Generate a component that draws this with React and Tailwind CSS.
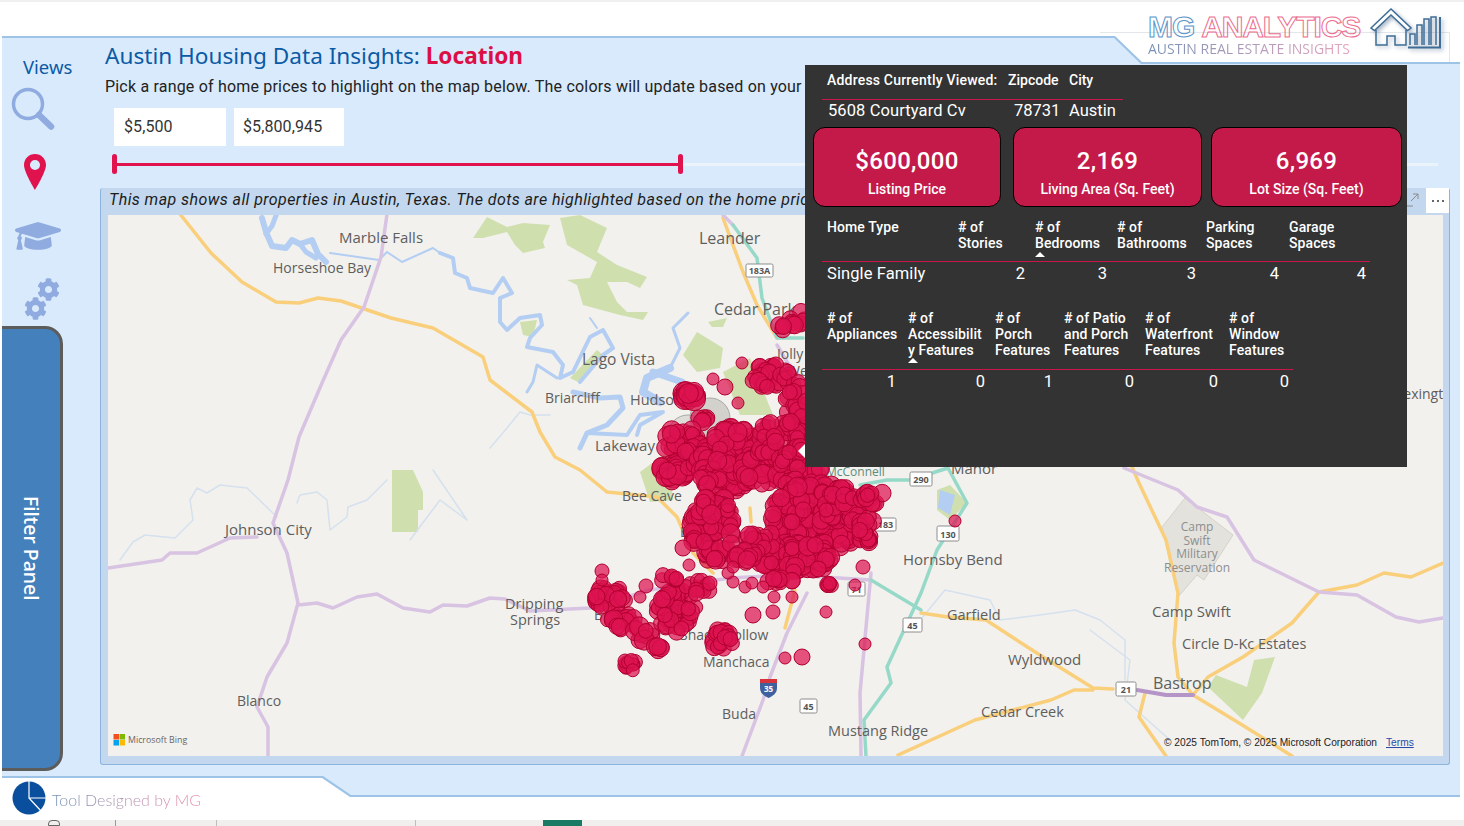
import React from 'react';
import { FaCog, FaGraduationCap } from 'react-icons/fa';

const din = "font-['Roboto','Liberation_Sans',sans-serif]";

// x, y, rx, ry, count, min radius, max radius
const clusters = [
  [797, 318, 8, 9, 8, 7, 9], [780, 328, 5, 3, 4, 7, 9],
  [771, 376, 21, 12, 42, 7, 9], [797, 410, 12, 30, 34, 7, 9],
  [690, 395, 8, 5, 16, 9, 12], [702, 418, 6, 4, 7, 7, 9],
  [683, 443, 18, 16, 40, 7, 10], [672, 472, 16, 9, 30, 8, 11],
  [703, 457, 24, 14, 36, 7, 10], [733, 441, 20, 20, 44, 7, 10],
  [725, 475, 26, 16, 55, 7, 10], [762, 467, 22, 18, 46, 7, 10],
  [780, 440, 25, 20, 56, 7, 9], [800, 467, 22, 22, 60, 7, 9],
  [713, 528, 22, 34, 95, 7, 10], [815, 520, 45, 38, 230, 7, 10],
  [843, 507, 18, 20, 50, 7, 9], [866, 530, 10, 14, 20, 7, 9],
  [872, 497, 12, 8, 18, 7, 9], [797, 558, 38, 15, 90, 7, 10],
  [760, 540, 16, 12, 28, 7, 9], [747, 555, 16, 8, 18, 7, 9],
  [829, 585, 6, 2, 6, 6, 8], [780, 580, 15, 4, 10, 7, 9],
  [610, 597, 16, 12, 34, 7, 9], [620, 620, 14, 10, 16, 7, 10],
  [643, 633, 10, 10, 10, 7, 10], [657, 648, 5, 5, 5, 7, 9],
  [630, 665, 7, 7, 11, 6, 8], [677, 610, 20, 22, 62, 7, 9],
  [700, 587, 14, 7, 13, 7, 8], [670, 578, 10, 5, 7, 7, 8],
  [723, 640, 12, 12, 24, 7, 9],
];

const strays = [
  [742, 363, 6], [713, 379, 6], [725, 387, 8], [738, 403, 6], [683, 548, 8], [689, 565, 6],
  [863, 567, 7], [855, 585, 6], [826, 612, 6], [865, 644, 6], [785, 658, 6], [802, 657, 8],
  [753, 615, 8], [773, 612, 7], [792, 597, 6], [774, 597, 6], [763, 587, 6], [745, 587, 6],
  [752, 583, 6], [733, 582, 6], [728, 573, 6], [733, 567, 6], [646, 586, 7], [640, 597, 6],
  [602, 571, 7], [602, 580, 6], [955, 521, 6],
];

const buildDots = () => {
  let seed = 4127;
  const rand = () => {
    seed = (seed * 16807) % 2147483647;
    return seed / 2147483647;
  };
  const dots = [];
  clusters.forEach(([x, y, rx, ry, count, min, max]) => {
    for (let i = 0; i < count; i++) {
      const angle = rand() * Math.PI * 2;
      const dist = Math.sqrt(rand());
      dots.push([x + Math.cos(angle) * dist * rx, y + Math.sin(angle) * dist * ry, min + rand() * (max - min)]);
    }
  });
  return [...dots, ...strays];
};

const dots = buildDots();

const orangeRoads = [
  '180,214 211,253 242,282 276,302 299,303 318,298 341,301 391,318 433,328 483,357 490,380 532,412 540,432 555,457 580,470 607,492 657,497 677,517 693,553 713,573',
  '723,218 743,272 757,305 777,338',
  '921,613 948,617 986,620 1032,650 1093,688 1113,689',
  '1093,690 1074,690 1051,700 975,720 898,755',
  '1132,467 1139,483 1166,540 1178,593 1174,643 1178,677 1193,695 1239,723 1292,756',
  '1193,695 1208,677 1243,657 1292,623 1319,592 1357,585 1384,573 1411,577 1443,563',
  '1145,693 1139,717 1166,756',
  '795,590 785,628',
  '750,508 751,522',
];

const purpleRoads = [
  '387,214 381,257 364,307 341,340 322,383 299,437 288,480 273,523 287,553 298,603 287,643 267,677 257,707 268,727 268,756',
  '108,568 162,560 170,553 197,553 230,538 257,537',
  '298,605 317,603 333,608 357,597 377,594 403,608 430,612 443,605 467,606 490,598 505,599 530,611 590,608 650,590 730,578 790,575 871,580',
  '1124,468 1178,490 1197,507 1227,517 1254,560 1319,592 1357,595 1396,617 1419,622 1443,618',
  '807,593 787,633 770,677 763,700 742,756',
  '871,573 860,693 861,756',
  '723,215 733,225',
  '777,345 787,362 807,385',
];

const tealRoads = [
  '948,468 967,503 937,550 921,593 887,667 891,683 864,720 866,756',
  '860,485 887,480 910,480 948,468',
  '871,580 921,610',
  '733,225 757,258 762,298 777,338 803,338',
];

const lakes = [
  ['262,218 266,232 272,246 286,248 292,240 300,244 312,240 318,254 326,262', 6],
  ['277,213 272,226 266,234', 5],
  ['300,244 306,252 316,258', 5],
  ['440,253 453,258 455,273 467,278 470,288 493,293 503,278 512,293 500,298 500,322 507,330 520,318 540,315 542,325 530,338 527,347 553,352 563,365 560,378 573,372 590,337 603,330 613,348 603,355 580,382', 4],
  ['557,378 537,365 533,382 527,392', 3],
  ['573,392 600,398 620,397 623,408 607,425 587,433 580,448', 5],
  ['587,433 627,435 640,415 663,412 640,425 637,435', 4],
  ['688,313 673,328 680,348 670,368', 3],
  ['670,368 647,378 643,392 660,402', 8],
  ['653,372 682,382', 7],
  ['590,318 597,328', 2],
  ['330,253 379,260 387,252 402,262 433,248 440,253', 2],
];

const faintRivers = [
  '912,630 945,590 990,600 1000,620 1040,615 1075,610 1100,620 1125,640 1125,680',
  '1090,630 1130,660 1125,700 1170,740',
  '490,448 507,428 520,412 530,415 550,415',
  '120,560 133,542 145,535 175,538 193,520 190,500 197,488 207,493 220,485 247,488 277,517',
  '297,503 300,495 317,492 327,500 330,530 347,517 348,507 367,500 387,480',
  '433,470 467,520 440,500 410,540',
];

const greens = [
  '473,238 487,217 507,227 523,223 550,225 543,242 545,248 523,253 515,245 507,232 483,238',
  '560,218 580,215 607,228 597,252 617,265 647,277 640,288 627,282 607,282 617,302 627,312 648,312 643,320 620,315 583,305 577,285 567,280 590,278 597,262 567,245',
  '683,355 697,332 723,348 720,368 697,372',
  '708,322 727,318 723,327 712,327',
  '520,322 537,320 533,337 523,335',
  '570,378 597,350 603,355 580,383',
  '723,372 750,358 773,415 740,415',
  '640,472 667,452 673,500 650,502',
  '392,470 413,470 423,492 423,510 418,510 418,532 392,532',
  '1254,660 1275,657 1262,693 1243,720 1208,687 1216,675 1247,687',
  '937,490 950,485 967,503 950,520 937,510',
];

const labels = [
  ['Marble Falls', 339, 243, 15], ['Horseshoe Bay', 273, 273, 14], ['Leander', 699, 244, 16],
  ['Cedar Park', 714, 315, 16], ['Lago Vista', 582, 365, 15.500], ['Briarcliff', 545, 403, 14],
  ['Hudson', 630, 405, 14.500], ['Lakeway', 595, 451, 15], ['Bee Cave', 622, 501, 14],
  ['Johnson City', 225, 535, 15], ['Dripping', 505, 609, 14.500], ['Springs', 510, 625, 14.500],
  ['Blanco', 237, 706, 14], ['Buda', 722, 719, 14], ['Manchaca', 703, 667, 14],
  ['Mustang Ridge', 828, 736, 14.500], ['Cedar Creek', 981, 717, 14.500], ['Wyldwood', 1008, 665, 15],
  ['Garfield', 947, 620, 14.500], ['Hornsby Bend', 903, 565, 15], ['Manor', 951, 474, 15],
  ['Camp Swift', 1152, 617, 15], ['Circle D-Kc Estates', 1182, 649, 14.500], ['Bastrop', 1153, 689, 16],
  ['Lexington', 1396, 399, 14], ['Jolly', 777, 359, 14], ['Well', 787, 376, 14],
  ['Bar', 680, 537, 14], ['Bear', 594, 620, 14], ['Shady Hollow', 680, 640, 14],
];

const shields = [
  ['183A', 746, 264, 27, 13], ['183', 875, 518, 21, 13], ['290', 910, 472, 22, 14], ['130', 937, 526, 22, 15],
  ['71', 848, 582, 17, 14], ['45', 903, 618, 19, 14], ['45', 800, 699, 17, 14], ['21', 1116, 682, 20, 14],
];

const line = (points, color, width) => (
  <polyline key={points} points={points} fill="none" stroke={color} strokeWidth={width} strokeLinejoin="round" strokeLinecap="round" />
);

const AustinMap = () => (
  <svg viewBox="108 215 1335 541" className="block w-full h-full font-['Open_Sans',sans-serif]">
    <rect x="108" y="215" width="1335" height="541" fill="#f2f1ed" />
    {greens.map((g) => <polygon key={g} points={g} fill="#cfdfae" />)}
    <polygon points="1185,498 1233,535 1204,580 1197,575 1178,597 1162,527" fill="#e3e2dd" stroke="#d5d3c8" />
    {faintRivers.map((r) => line(r, '#d5e1ee', 1.5))}
    {lakes.map(([r, w]) => line(r, '#b3cef2', w))}
    <polygon points="940,490 955,495 950,515 938,508" fill="#b3cef2" />
    {orangeRoads.map((r) => line(r, '#f9cf7c', 3.5))}
    {purpleRoads.map((r) => line(r, '#d8c3e2', 3.5))}
    {tealRoads.map((r) => line(r, '#97d9c8', 3.5))}
    {line('1137,690 1166,695 1193,695', '#b595c8', 4)}
    {labels.map(([text, x, y, size]) => (
      <text key={text} x={x} y={y} fontSize={size} fill="#5e5e5e">{text}</text>
    ))}
    <text x="826" y="476" fontSize="12" fill="#5c8c7c">McConnell</text>
    {['Camp', 'Swift', 'Military', 'Reservation'].map((t, i) => (
      <text key={t} x="1197" y={531 + i * 13.7} fontSize="12" fill="#8e8e8e" textAnchor="middle">{t}</text>
    ))}
    {shields.map(([text, x, y, w, h]) => (
      <g key={`${text}${x}`}>
        <rect x={x} y={y} width={w} height={h} rx="1.5" fill="#fff" stroke="#8d8d8d" />
        <text x={x + w / 2} y={y + h - 3.5} fontSize="9" fontWeight="700" fill="#555" textAnchor="middle">{text}</text>
      </g>
    ))}
    <path d="M760 679h17v9c0 5-4 8-8.500 10c-4.500-2-8.500-5-8.500-10z" fill="#3f5f9f" />
    <path d="M760 679h17v4h-17z" fill="#d8323a" />
    <text x="768.500" y="692" fontSize="8" fontWeight="700" fill="#fff" textAnchor="middle">35</text>
    <circle cx="710" cy="418" r="20" fill="#c9c9c3" fillOpacity="0.8" stroke="#a9a9a9" />
    <circle cx="688" cy="435" r="20" fill="#c9c9c3" fillOpacity="0.5" stroke="#a9a9a9" />
    {dots.map(([x, y, r], i) => (
      <circle key={i} cx={x} cy={y} r={r} fill="#dc1450" fillOpacity="0.72" stroke="#b0002f" strokeWidth="1" />
    ))}
    <g>
      <rect x="113.500" y="734" width="5.500" height="5.500" fill="#f25022" />
      <rect x="119.500" y="734" width="5.500" height="5.500" fill="#7fba00" />
      <rect x="113.500" y="740" width="5.500" height="5.500" fill="#00a4ef" />
      <rect x="119.500" y="740" width="5.500" height="5.500" fill="#ffb900" />
      <text x="128" y="743" fontSize="8.800" fill="#666">Microsoft Bing</text>
    </g>
    <text x="1164" y="746" fontSize="10.200" fill="#222" className="font-['Liberation_Sans',sans-serif]">© 2025 TomTom, © 2025 Microsoft Corporation</text>
    <text x="1386" y="746" fontSize="10.200" fill="#2b4aa8" textDecoration="underline" className="font-['Liberation_Sans',sans-serif]">Terms</text>
  </svg>
);

const HouseMark = () => (
  <svg viewBox="0 0 72 44" className="w-[72px] h-[44px] drop-shadow-[2px_2px_2px_rgba(60,90,130,0.45)]" fill="none" stroke="#3f6d96" strokeWidth="1.500">
    <path d="M1 21L21 2L41 21L37.500 23.500L21 8L4.500 23.500Z" fill="#fff" />
    <path d="M6 23V38H17V29H25V38H36V23" />
    <path d="M40 38V27H45V38M47 38V18H52V38M54 38V12H59V38M61 38V10H66V38" />
    <path d="M38 40.500H70V10" strokeWidth="2" />
  </svg>
);

const Logo = () => (
  <div className="flex items-start h-[62px] pr-[22px]">
    <div className="w-[222px] pt-[10px]">
      <div className="flex gap-[7px] h-[28px] text-[30px] leading-[30px] font-bold tracking-[-1.1px] text-transparent font-['Liberation_Sans',sans-serif]">
        <span className="[-webkit-text-stroke:1px_#5b94c8]">MG</span>
        <span className="[-webkit-text-stroke:1px_#ec6d90]">ANALYTICS</span>
      </div>
      <div className="w-fit whitespace-nowrap text-[14px] leading-[17px] bg-gradient-to-r from-[#7690b4] to-[#e5a3bd] bg-clip-text text-transparent font-['Open_Sans',sans-serif]">
        AUSTIN REAL ESTATE INSIGHTS
      </div>
    </div>
    <div className="mt-[5px]">
      <HouseMark />
    </div>
  </div>
);

const Sidebar = () => (
  <div className="w-[98px] shrink-0 flex flex-col items-start text-[#8fabdf]">
    <div className="ml-[21px] mt-[20px] h-[22px] leading-[22px] text-[18.500px] text-[#0b5aa5] font-['Noto_Sans',sans-serif]">Views</div>
    <svg viewBox="0 0 44 43" className="ml-[9px] mt-[9px] w-[44px] h-[43px]" fill="none" stroke="currentColor">
      <circle cx="17" cy="17" r="14.500" strokeWidth="3.500" />
      <path d="M28 28L40 39.500" strokeWidth="6.500" strokeLinecap="round" />
    </svg>
    <svg viewBox="0 0 22 36" className="ml-[22px] mt-[24px] w-[22px] h-[36px] text-[#e0134f]">
      <path fill="currentColor" fillRule="evenodd" d="M11 0C4.900 0 0 4.900 0 11C0 18 11 36 11 36S22 18 22 11C22 4.900 17.100 0 11 0ZM11 6A5 5 0 1 1 11 16A5 5 0 1 1 11 6Z" />
    </svg>
    <FaGraduationCap className="ml-[13px] mt-[27px] w-[46px] h-[38px]" />
    <div className="ml-[22px] mt-[23px] w-[36px] h-[43px] flex flex-col">
      <FaCog className="self-end w-[23px] h-[23px]" />
      <FaCog className="self-start -mt-[4px] w-[23px] h-[23px]" />
    </div>
    <button className="mt-[5px] w-[61px] h-[445px] flex items-center justify-center rounded-r-[18px] border-[3px] border-l-0 border-[#5c5c5c] bg-[#4480bc] text-white text-[19.500px] font-medium font-['Noto_Sans',sans-serif]">
      <span className="[writing-mode:vertical-rl]">Filter Panel</span>
    </button>
  </div>
);

const Slider = () => (
  <div className="relative ml-[13px] mt-[8px] h-[20px] w-[1325px] flex items-center">
    <div className="h-[3px] w-[567px] bg-[#e0134f]" />
    <div className="h-[3px] flex-1 bg-[#eaf2fa]" />
    <div className="absolute left-0 top-0 w-[5px] h-[20px] -ml-[1px] rounded-sm bg-[#e0134f]" />
    <div className="absolute left-[565px] top-0 w-[5px] h-[20px] rounded-sm bg-[#e0134f]" />
  </div>
);

const MapCard = () => (
  <div className="relative mt-[14px] w-[1350px] h-[577px] rounded-[3px] border-l border-b border-r border-[#8db4de] bg-[#c3d8ee] flex flex-col">
    <div className={`h-[27px] pl-[8px] leading-[23px] text-[16px] italic tracking-[0.42px] whitespace-nowrap overflow-hidden text-[#1c1c1c] ${din}`}>
      This map shows all properties in Austin, Texas. The dots are highlighted based on the home price range selected above.
    </div>
    <div className="ml-[7px] w-[1335px] h-[541px]">
      <AustinMap />
    </div>
    <div className="absolute right-[30px] top-[5px] text-[#8c8c8c]">
      <svg viewBox="0 0 14 14" className="w-[14px] h-[14px]" fill="none" stroke="currentColor">
        <path d="M1 6V13H8M6 8L13 1M8 1H13V6" />
      </svg>
    </div>
    <div className="absolute right-0 top-0 w-[23px] h-[25px] bg-white flex items-center justify-center gap-[3px]">
      <span className="w-[2px] h-[2px] bg-[#666]" />
      <span className="w-[2px] h-[2px] bg-[#666]" />
      <span className="w-[2px] h-[2px] bg-[#666]" />
    </div>
  </div>
);

const tableHead = (text, caretClass) => (
  <div key={text} className="relative pl-[5px] tracking-[0.1px]">
    {text.split('\n').map((t) => <div key={t} className="whitespace-nowrap">{t}</div>)}
    {caretClass && <div className={`absolute left-[5px] w-0 h-0 border-x-[5px] border-x-transparent border-b-[5px] border-b-white ${caretClass}`} />}
  </div>
);

const kpis = [
  ['$600,000', 'Listing Price', 'w-[188px]'],
  ['2,169', 'Living Area (Sq. Feet)', 'w-[189px] ml-[12px]'],
  ['6,969', 'Lot Size (Sq. Feet)', 'w-[191px] ml-[9px]'],
];

const DetailPanel = () => (
  <div className={`absolute left-[803px] top-[29px] w-[602px] h-[402px] bg-[#333333] text-white text-[14px] leading-[16px] font-medium ${din}`}>
    <div className="absolute -left-[7px] top-[379px] w-0 h-0 border-y-[7px] border-y-transparent border-r-[7px] border-r-white" />
    <div className="ml-[17px] w-[301px] pt-[7px] pb-[11px] border-b border-[#c8174a] grid grid-cols-[186px_61px_54px]">
      <div className="pl-[5px] whitespace-nowrap tracking-[0.2px]">Address Currently Viewed:</div>
      <div>Zipcode</div>
      <div>City</div>
    </div>
    <div className="ml-[17px] w-[301px] h-[27px] grid grid-cols-[186px_61px_54px] items-start pt-[1px] leading-[20px] text-[16.500px] font-normal">
      <div className="pl-[6px] whitespace-nowrap tracking-[0.1px]">5608 Courtyard Cv</div>
      <div className="pl-[6px] -mr-[6px]">78731</div>
      <div>Austin</div>
    </div>
    <div className="flex ml-[8px]">
      {kpis.map(([value, label, width]) => (
        <div key={label} className={`${width} h-[80px] flex flex-col items-center rounded-[12px] border border-black bg-[#c41a49]`}>
          <div className="mt-[18px] h-[30px] leading-[30px] tracking-[0.3px] text-[24px]">{value}</div>
          <div className="mt-[4px] text-[14px] leading-[18px] whitespace-nowrap">{label}</div>
        </div>
      ))}
    </div>
    <div className="ml-[17px] mt-[12px] w-[548px] h-[43px] border-b border-[#c8174a] grid grid-cols-[131px_77px_82px_89px_83px_86px]">
      {tableHead('Home Type')}
      {tableHead('# of\nStories')}
      {tableHead('# of\nBedrooms', 'top-[33px]')}
      {tableHead('# of\nBathrooms')}
      {tableHead('Parking\nSpaces')}
      {tableHead('Garage\nSpaces')}
    </div>
    <div className="ml-[17px] w-[548px] h-[24px] grid grid-cols-[131px_77px_82px_89px_83px_86px] items-center text-[16.500px] font-normal text-right">
      <div className="pl-[5px] text-left whitespace-nowrap tracking-[0.1px]">Single Family</div>
      <div className="pr-[5px]">2</div>
      <div className="pr-[5px]">3</div>
      <div className="pr-[5px]">3</div>
      <div className="pr-[5px]">4</div>
      <div className="pr-[4px]">4</div>
    </div>
    <div className="ml-[17px] mt-[24px] w-[471px] h-[60px] border-b border-[#c8174a] grid grid-cols-[81px_87px_69px_81px_84px_69px]">
      {tableHead('# of\nAppliances')}
      {tableHead('# of\nAccessibilit\ny Features', 'top-[48px]')}
      {tableHead('# of\nPorch\nFeatures')}
      {tableHead('# of Patio\nand Porch\nFeatures')}
      {tableHead('# of\nWaterfront\nFeatures')}
      {tableHead('# of\nWindow\nFeatures')}
    </div>
    <div className="ml-[17px] w-[471px] h-[24px] grid grid-cols-[81px_87px_69px_81px_84px_69px] items-center text-[16.500px] font-normal text-right">
      <div className="pr-[7px]">1</div>
      <div className="pr-[5px]">0</div>
      <div className="pr-[6px]">1</div>
      <div className="pr-[6px]">0</div>
      <div className="pr-[6px]">0</div>
      <div className="pr-[4px]">0</div>
    </div>
  </div>
);

const Footer = () => (
  <div className="relative z-10 -mt-[19px] h-[42px] ml-[12px] flex items-start gap-[6px]">
    <svg viewBox="0 0 34 34" className="mt-[3px] w-[34px] h-[34px]">
      <circle cx="17" cy="17" r="16.500" fill="#0a4f9e" />
      <path d="M17 0V17H34M17 17L29 30" fill="none" stroke="#fff" strokeWidth="1.200" />
    </svg>
    <div className="mt-[11px] text-[16px] leading-[22px] font-light whitespace-nowrap bg-gradient-to-r from-[#6f8fb3] to-[#ea8aa8] bg-clip-text text-transparent font-['Lato',sans-serif]">
      Tool Designed by MG
    </div>
  </div>
);

const BottomStrip = () => (
  <div className="h-[6px] bg-[#f0efed] flex">
    <div className="w-[116px] relative border-r border-[#9a9a9a]">
      <div className="absolute left-[48px] top-0 w-[12px] h-[6px] border border-[#666] rounded-t-sm" />
    </div>
    <div className="w-[101px] border-r border-[#bdbdbd]" />
    <div className="w-[199px] border-r border-[#bdbdbd]" />
    <div className="w-[127px]" />
    <div className="w-[39px] bg-[#1a7a64]" />
  </div>
);

const App = () => {
  return (
    <div className="w-[1464px] h-[826px] overflow-hidden bg-white flex flex-col">
      <div className="relative z-10 h-[36px] shrink-0 flex justify-end border-t-2 border-[#f0f0f0]">
        <div className="absolute left-[1100px] top-[30px] w-[350px] h-[30px] border-t border-r border-[#e3e7ec]" />
        <div className="relative">
          <Logo />
        </div>
      </div>
      <div className="relative ml-[2px] w-[1458px] h-[761px] shrink-0 flex bg-[#9dc3e6] [clip-path:polygon(0_0,1113px_0,1140px_26px,100%_26px,100%_100%,348px_100%,320px_742px,0_742px)]">
        <div className="absolute inset-0 bg-[#d8eafc] [clip-path:polygon(0_2px,1112px_2px,1139px_28px,100%_28px,100%_759px,349px_759px,321px_740px,0_740px)]" />
        <div className="relative flex">
          <Sidebar />
          <div className="flex flex-col">
            <h1 className="mt-[4px] pl-[5px] h-[32px] leading-[32px] text-[22.600px] text-[#0b5aa5] whitespace-nowrap font-['Noto_Sans',sans-serif]">
              Austin Housing Data Insights: <span className="font-bold text-[#dc0f45]">Location</span>
            </h1>
            <p className={`mt-[4px] pl-[5px] h-[22px] leading-[22px] text-[16px] tracking-[0.19px] text-[#222] whitespace-nowrap ${din}`}>
              Pick a range of home prices to highlight on the map below. The colors will update based on your selection.
            </p>
            <div className={`ml-[14px] mt-[10px] flex gap-[8px] text-[16px] text-[#333] ${din}`}>
              <div className="w-[112px] h-[38px] pl-[10px] leading-[38px] bg-white tracking-[0.1px]">$5,500</div>
              <div className="w-[110px] h-[38px] pl-[9px] leading-[38px] bg-white tracking-[0.1px]">$5,800,945</div>
            </div>
            <Slider />
            <MapCard />
          </div>
        </div>
        <DetailPanel />
      </div>
      <Footer />
      <BottomStrip />
    </div>
  );
};

export default App;
